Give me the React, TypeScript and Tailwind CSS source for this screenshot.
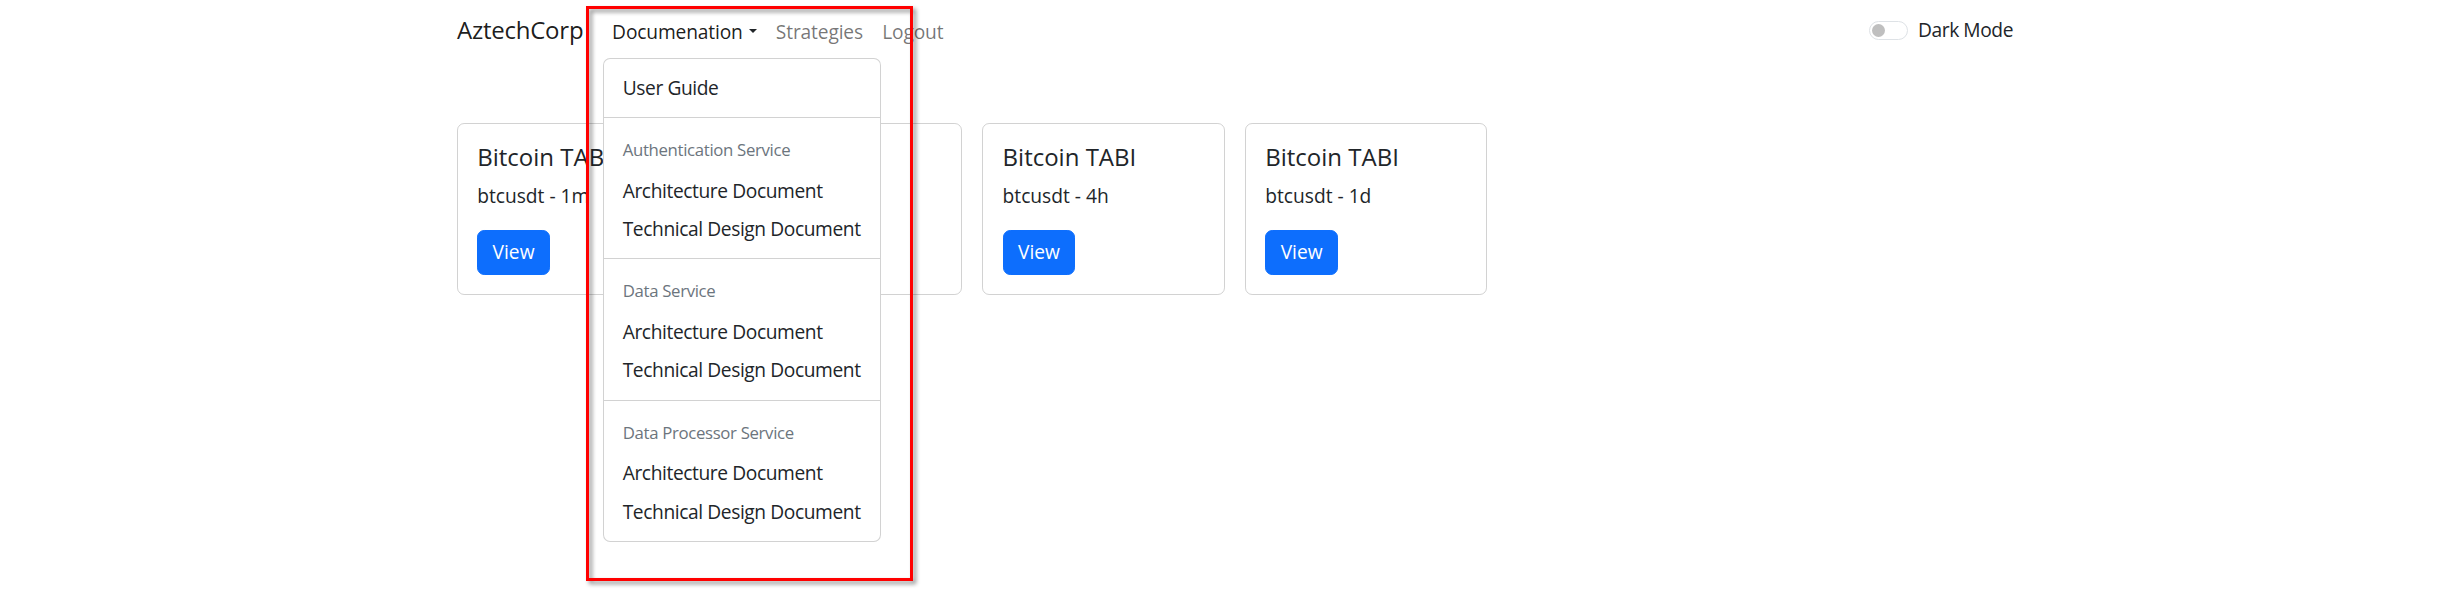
import React from "react";

const cards = [
  { title: "Bitcoin TABI", sub: "btcusdt - 1m" },
  { title: "Bitcoin TABI", sub: "btcusdt - 1h" },
  { title: "Bitcoin TABI", sub: "btcusdt - 4h" },
  { title: "Bitcoin TABI", sub: "btcusdt - 1d" },
];

const sections = ["Authentication Service", "Data Service", "Data Processor Service"];

function Item({ children }: { children: React.ReactNode }) {
  return (
    <a className="block px-[19.2px] py-[4.8px] text-[19.2px] leading-[28.8px] tracking-[-0.021em] text-[#212529] whitespace-nowrap">
      {children}
    </a>
  );
}

export default function App() {
  return (
    <div className="relative min-h-[606px] bg-white text-[#212529] font-['Open_Sans',sans-serif]">
      <nav className="pt-[8.5px] pb-[9px]">
        <div className="ml-[457px] w-[1556px] h-[48px] flex items-start">
          <a className="text-[24px] leading-[36px] pt-[3.6px] mr-[19.2px] tracking-[-0.01em] whitespace-nowrap text-[rgba(0,0,0,0.9)]">
            AztechCorp
          </a>
          <ul className="flex">
            <li className="relative">
              <a className="flex items-center px-[9.6px] py-[9.6px] text-[19.2px] leading-[28.8px] tracking-[-0.008em] text-[rgba(0,0,0,0.9)] whitespace-nowrap">
                Documenation
                <span className="ml-[6px] mb-[2px] w-0 h-0 border-l-[4px] border-r-[4px] border-t-[4.5px] border-l-transparent border-r-transparent border-t-[#212529]" />
              </a>
              <div className="absolute left-0 top-full mt-[1.8px] z-10 bg-white border border-[rgba(0,0,0,0.175)] rounded-[7.2px] py-[9.6px]">
                <Item>User Guide</Item>
                {sections.map((s) => (
                  <div key={s}>
                    <div className="my-[9.6px] border-t border-[rgba(0,0,0,0.175)]" />
                    <h6 className="px-[19.2px] py-[9.6px] text-[16.8px] leading-[25.2px] tracking-[-0.02em] text-[#6c757d] whitespace-nowrap">
                      {s}
                    </h6>
                    <Item>Architecture Document</Item>
                    <Item>Technical Design Document</Item>
                  </div>
                ))}
              </div>
            </li>
            <li>
              <a className="block px-[9.6px] py-[9.6px] text-[19.2px] leading-[28.8px] tracking-[-0.008em] text-[rgba(0,0,0,0.55)]">
                Strategies
              </a>
            </li>
            <li>
              <a className="block px-[9.6px] py-[9.6px] text-[19.2px] leading-[28.8px] tracking-[-0.008em] text-[rgba(0,0,0,0.55)]">
                Logout
              </a>
            </li>
          </ul>
          <div className="ml-auto mt-[7.4px] flex items-start">
            <span className="mt-[5px] w-[38.4px] h-[19.2px] rounded-full border border-[#dee2e6] flex items-center">
              <span className="ml-[2.2px] w-[13px] h-[13px] rounded-full bg-[#bfbfbf]" />
            </span>
            <label className="ml-[10.4px] text-[19.2px] leading-[28.8px] tracking-[-0.022em] text-[#212529]">Dark Mode</label>
          </div>
        </div>
      </nav>

      <div className="ml-[457px] mt-[57.8px] flex gap-[20.4px]">
        {cards.map((c, i) => (
          <div
            key={i}
            className="w-[242.3px] border border-[rgba(0,0,0,0.175)] rounded-[7.2px] p-[19.2px]"
          >
            <h5 className="text-[24px] leading-[28.8px] font-medium mb-[9.6px]">{c.title}</h5>
            <p className="text-[19.2px] leading-[28.8px] mb-[19.2px]">{c.sub}</p>
            <button className="bg-[#0d6efd] text-white text-[19.2px] leading-[28.8px] px-[14.4px] py-[7.2px] rounded-[7.2px] border border-[#0d6efd]">
              View
            </button>
          </div>
        ))}
      </div>

      <div className="absolute left-[586px] top-[6px] w-[326.7px] h-[574.7px] border-[3.3px] border-[#ff0000] drop-shadow-[3px_3px_2px_rgba(0,0,0,0.45)] pointer-events-none z-20" />
    </div>
  );
}
